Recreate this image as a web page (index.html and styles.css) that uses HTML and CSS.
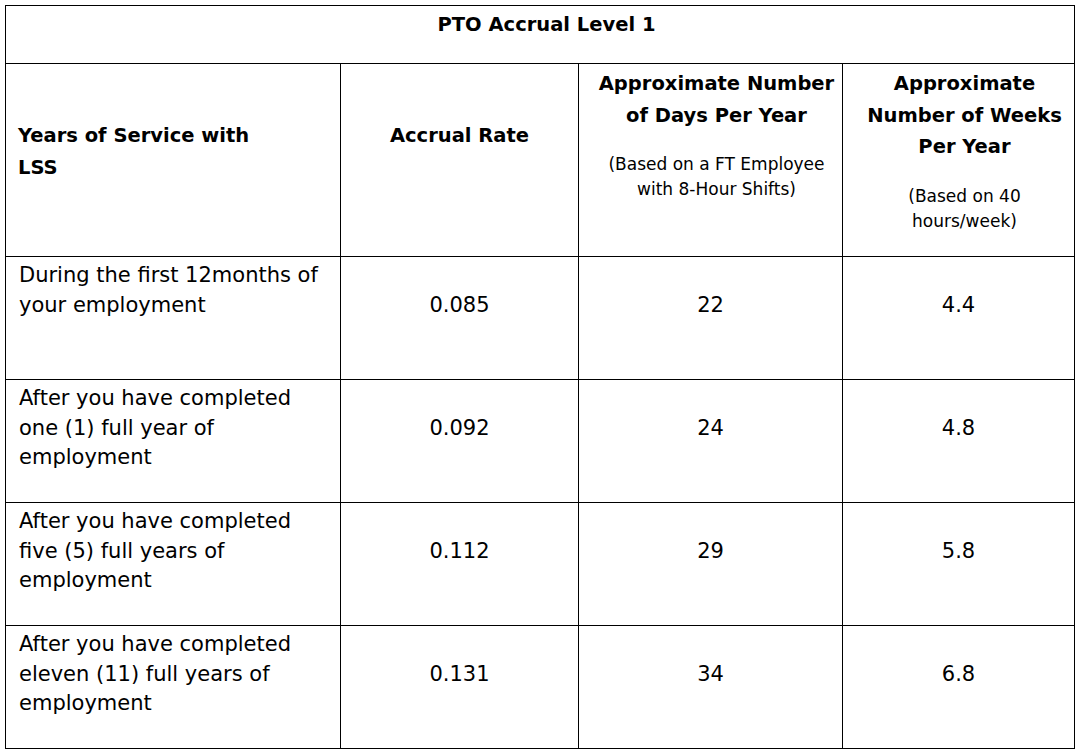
FILE: index.html
```html
<!DOCTYPE html>
<html lang="en">
<head>
<meta charset="utf-8">
<title>PTO Accrual Level 1</title>
<link rel="stylesheet" href="styles.css">
</head>
<body>
<table class="pto">
  <colgroup>
    <col class="c-years">
    <col class="c-rate">
    <col class="c-days">
    <col class="c-weeks">
  </colgroup>
  <tr class="r-title">
    <th colspan="4" class="title">PTO Accrual Level 1</th>
  </tr>
  <tr class="r-head">
    <th class="h-years">Years of Service with<br>LSS</th>
    <th class="h-rate">Accrual Rate</th>
    <th class="h-days">Approximate Number<br>of Days Per Year
      <span class="sub">(Based on a FT Employee<br>with 8-Hour Shifts)</span></th>
    <th class="h-weeks">Approximate<br>Number of Weeks<br>Per Year
      <span class="sub">(Based on 40<br>hours/week)</span></th>
  </tr>
  <tr class="r-body">
    <td class="desc">During the first 12months of<br>your employment</td>
    <td class="num">0.085</td>
    <td class="num">22</td>
    <td class="num">4.4</td>
  </tr>
  <tr class="r-body">
    <td class="desc">After you have completed<br>one (1) full year of<br>employment</td>
    <td class="num">0.092</td>
    <td class="num">24</td>
    <td class="num">4.8</td>
  </tr>
  <tr class="r-body">
    <td class="desc">After you have completed<br>five (5) full years of<br>employment</td>
    <td class="num">0.112</td>
    <td class="num">29</td>
    <td class="num">5.8</td>
  </tr>
  <tr class="r-body">
    <td class="desc">After you have completed<br>eleven (11) full years of<br>employment</td>
    <td class="num">0.131</td>
    <td class="num">34</td>
    <td class="num">6.8</td>
  </tr>
</table>
</body>
</html>
```

FILE: styles.css
```css
html, body {
  margin: 0;
  background: #fff;
}

body {
  padding: 5px 0 0 5px;
  font-family: "DejaVu Sans", Verdana, sans-serif;
  color: #000;
}

.pto {
  border-collapse: collapse;
  table-layout: fixed;
  width: 1069px;
}

.c-years { width: 335px; }
.c-rate { width: 238px; }
.c-days { width: 264px; }
.c-weeks { width: 232px; }

.pto th,
.pto td {
  box-sizing: border-box;
  border: 1px solid #000;
  vertical-align: top;
  padding: 0;
}

.pto th {
  font-weight: bold;
  font-size: 19.5px;
  line-height: 31.5px;
}

.title {
  height: 58px;
  font-size: 21px;
  line-height: 30px;
  text-align: center;
  padding: 3px 0 0 13px !important;
}

.r-head th {
  height: 193px;
}

.h-years {
  text-align: left;
  padding: 56px 0 0 12px !important;
}

.h-rate {
  text-align: center;
  padding-top: 56px !important;
}

.h-days,
.h-weeks {
  text-align: center;
  padding: 4px 0 0 12px !important;
}

.sub {
  display: block;
  margin-top: 21px;
  font-weight: normal;
  font-size: 17px;
  line-height: 25px;
}

.r-body td {
  height: 123px;
  font-size: 21px;
  line-height: 29.5px;
}

.desc {
  text-align: left;
  padding: 4px 0 0 13px !important;
}

.num {
  text-align: center;
  padding-top: 34px !important;
}
```
